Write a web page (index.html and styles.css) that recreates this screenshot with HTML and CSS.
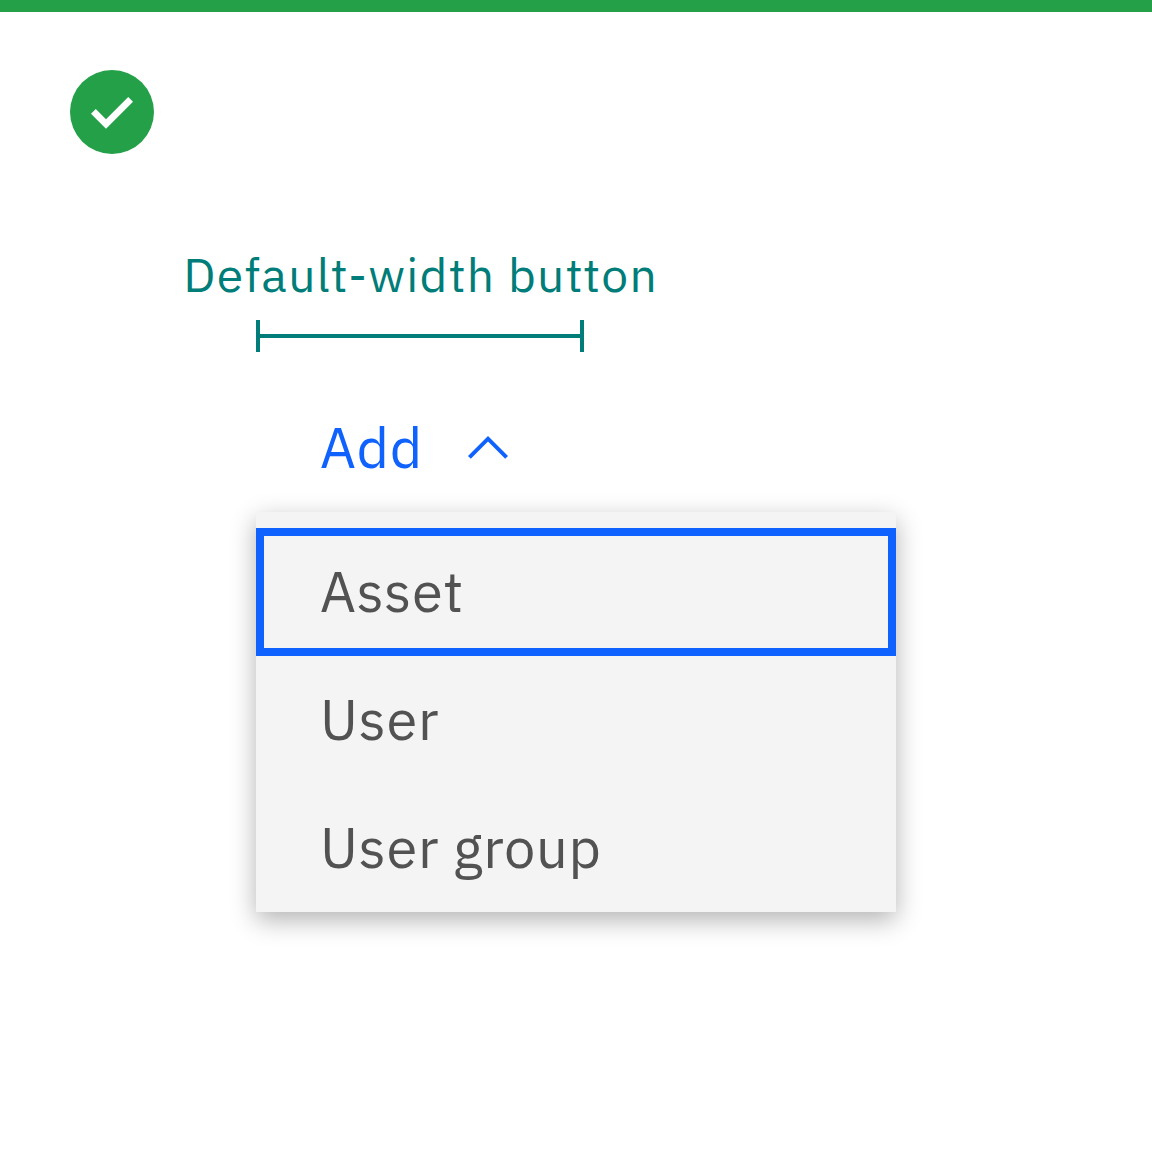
FILE: index.html
```html
<!DOCTYPE html>
<html lang="en">
<head>
<meta charset="utf-8">
<title>Menu button</title>
<link rel="stylesheet" href="styles.css">
</head>
<body>
<main class="example">
  <svg class="status" viewBox="2 2 28 28" aria-hidden="true">
    <circle cx="16" cy="16" r="14" fill="#24a148"/>
    <path d="M14 21.59 9 16.59 10.59 15 14 18.41 21.41 11 23 12.58z" fill="#fff"/>
  </svg>
  <section class="demo">
    <div class="measure">
      <p class="measure-label"><span>Default-width button</span></p>
      <div class="measure-line"></div>
    </div>
    <button class="trigger" type="button">
      <span class="trigger-label">Add</span>
      <svg class="chevron" viewBox="0 0 16 16" aria-hidden="true"><path d="M8 5 13 10 12.3 10.7 8 6.4 3.7 10.7 3 10z" fill="#0f62fe"/></svg>
    </button>
    <ul class="menu">
      <li class="item focused">Asset</li>
      <li class="item">User</li>
      <li class="item">User group</li>
    </ul>
  </section>
</main>
</body>
</html>
```
FILE: styles.css
```css
* { box-sizing: border-box; }
body { margin: 0; background: #fff; font-family: "IBM Plex Sans", "Noto Sans", sans-serif; }
.example { height: 1152px; border-top: 12px solid #24a148; padding: 58px 70px; }
.status { display: block; width: 84px; height: 84px; }
.demo { margin: 84px 0 0 186px; width: 640px; }
.measure { width: 328px; }
.measure-label { display: flex; justify-content: center; margin: 0; padding-left: 1.28px; height: 82px; line-height: 72px; font-size: 48px; letter-spacing: 1.28px; color: #007d79; white-space: nowrap; }
.measure-line { height: 32px; border: solid #007d79; border-width: 0 4px; background: linear-gradient(#007d79, #007d79) center / 100% 4px no-repeat; }
.trigger { display: flex; align-items: center; justify-content: space-between; width: 328px; height: 128px; margin-top: 32px; padding: 0 64px; border: 0; background: none; color: #0f62fe; font: inherit; font-size: 56px; line-height: 72px; letter-spacing: .64px; }
.trigger-label { padding-bottom: 2px; }
.chevron { width: 64px; height: 64px; }
.menu { margin: 0; padding: 16px 0 0; list-style: none; background: #f4f4f4; box-shadow: 0 8px 24px rgba(0,0,0,.3); }
.item { height: 128px; padding: 0 64px; line-height: 126px; font-size: 56px; letter-spacing: .64px; color: #525252; }
.focused { box-shadow: inset 0 0 0 8px #0f62fe; }
```
